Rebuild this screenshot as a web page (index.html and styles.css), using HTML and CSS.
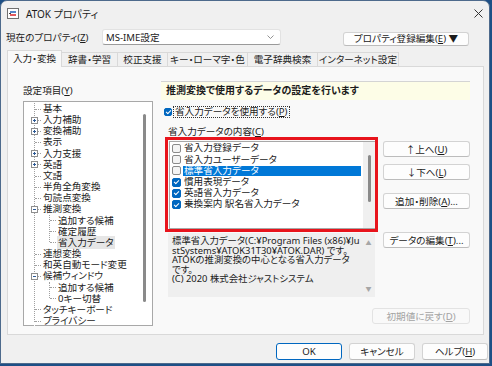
FILE: index.html
```html
<!DOCTYPE html>
<html>

<head>
	<meta charset="utf-8">
	<title>ATOK プロパティ</title>
	<link rel="stylesheet" href="styles.css">
</head>

<body>
	<div class="window">
		<div class="titlebar">
			<svg class="app-icon" width="12" height="11" viewBox="0 0 12 11">
				<rect x="0.5" y="0.5" width="11" height="10" fill="#fff" stroke="#707070" />
				<path d="M3 4 H9" stroke="#1c5fb8" stroke-width="1.3" />
				<path d="M3 7 H9" stroke="#d8232a" stroke-width="1.3" />
				<path d="M2 5.5 H4" stroke="#404040" stroke-width="1" />
			</svg>
			<span class="title">ATOK プロパティ</span>
			<svg class="close" width="9" height="9" viewBox="0 0 9 9">
				<path d="M0.5 0.5 L8.5 8.5 M8.5 0.5 L0.5 8.5" stroke="#333" stroke-width="1" />
			</svg>
		</div>

		<div class="profile-row">
			<span class="profile-label">現在のプロパティ(<u>Z</u>)</span>
			<div class="combo">
				<span>MS-IME設定</span>
				<svg width="7" height="4" viewBox="0 0 7 4">
					<path d="M0.5 0.5 L3.5 3.5 L6.5 0.5" fill="none" stroke="#777" stroke-width="0.8" />
				</svg>
			</div>
			<button class="btn profile-btn">プロパティ登録編集(<u>E</u>) ▼</button>
		</div>

		<div class="tabs">
			<div class="tab active t1">入力・変換</div>
			<div class="tab t2">辞書・学習</div>
			<div class="tab t3">校正支援</div>
			<div class="tab t4">キー・ローマ字・色</div>
			<div class="tab t5">電子辞典検索</div>
			<div class="tab t6">インターネット設定</div>
		</div>

		<div class="panel">
			<div class="left-col">
				<div class="field-label">設定項目(<u>Y</u>)</div>
				<div class="tree">
					<div class="tree-body">
						<div class="branch">
							<div class="node">基本</div>
							<div class="node"><span class="exp plus"></span>入力補助</div>
							<div class="node"><span class="exp plus"></span>変換補助</div>
							<div class="node">表示</div>
							<div class="node"><span class="exp plus"></span>入力支援</div>
							<div class="node"><span class="exp plus"></span>英語</div>
							<div class="node">文語</div>
							<div class="node">半角全角変換</div>
							<div class="node">句読点変換</div>
							<div class="node"><span class="exp"></span>推測変換</div>
							<div class="branch kids">
								<div class="node">追加する候補</div>
								<div class="node">確定履歴</div>
								<div class="node"><span class="selected">省入力データ</span></div>
							</div>
							<div class="node">連想変換</div>
							<div class="node">和英自動モード変更</div>
							<div class="node"><span class="exp"></span>候補ウィンドウ</div>
							<div class="branch kids">
								<div class="node">追加する候補</div>
								<div class="node">0キー切替</div>
							</div>
							<div class="node">タッチキーボード</div>
							<div class="node">プライバシー</div>
						</div>
					</div>
					<div class="vscroll"><div class="thumb"></div></div>
				</div>
			</div>

			<div class="right-col">
				<div class="banner">推測変換で使用するデータの設定を行います</div>
				<div class="check-row">
					<span class="cb small checked"></span>
					<span class="focus">省入力データを使用する(<u>P</u>)</span>
				</div>
				<div class="field-label sub">省入力データの内容(<u>C</u>)</div>

				<div class="data-grid">
					<div class="data-left">
						<div class="highlight">
							<div class="list">
								<div class="list-items">
									<div class="item"><span class="cb"></span><span class="text">省入力登録データ</span></div>
									<div class="item"><span class="cb"></span><span class="text">省入力ユーザーデータ</span></div>
									<div class="item current"><span class="cb"></span><span class="text">標準省入力データ</span></div>
									<div class="item"><span class="cb checked"></span><span class="text">慣用表現データ</span></div>
									<div class="item"><span class="cb checked"></span><span class="text">英語省入力データ</span></div>
									<div class="item"><span class="cb checked"></span><span class="text">乗換案内 駅名省入力データ</span></div>
								</div>
								<div class="list-scroll"><div class="thumb"></div></div>
							</div>
						</div>
						<div class="desc">
							<div class="desc-text">
								<div>標準省入力データ(C:¥Program Files (x86)¥Ju</div>
								<div>stSystems¥ATOK31T30¥ATOK.DAR) です。</div>
								<div>ATOKの推測変換の中心となる省入力データ</div>
								<div>です。</div>
								<div>(C) 2020 株式会社ジャストシステム</div>
							</div>
							<div class="desc-scroll"><span>▲</span><span>▼</span></div>
						</div>
					</div>

					<div class="side-buttons">
						<button class="btn">↑上へ(<u>U</u>)</button>
						<button class="btn down">↓下へ(<u>L</u>)</button>
						<button class="btn add">追加・削除(<u>A</u>)...</button>
						<button class="btn edit">データの編集(<u>T</u>)...</button>
					</div>
				</div>

				<div class="reset-row">
					<button class="btn disabled">初期値に戻す(<u>D</u>)</button>
				</div>
			</div>
		</div>

		<div class="footer">
			<button class="btn default">OK</button>
			<button class="btn">キャンセル</button>
			<button class="btn">ヘルプ(<u>H</u>)</button>
		</div>
	</div>
</body>

</html>
```

FILE: styles.css
```css
:root {
	--face: #f0f0f0;
	--sheet: #f9f9f9;
	--line: #d9d9d9;
	--dots: #a0a0a0;
	--text: #1b1b1b;
	--accent: #0067c0;
}

body {
	margin: 0;
	background: #1d4f86;
	color: var(--text);
	font-family: "Noto Sans", "Noto Sans CJK JP", sans-serif;
	font-size: 9.6px;
	font-feature-settings: "palt" 1;
}

u {
	text-decoration-thickness: 1px;
	text-underline-offset: 1px;
}

.window {
	width: 490px;
	height: 364px;
	box-sizing: border-box;
	border: 1px solid #4d6a8c;
	border-radius: 7px 7px 0 0;
	background: var(--face);
	display: flex;
	flex-direction: column;
	overflow: hidden;
}

.titlebar {
	height: 24px;
	display: flex;
	align-items: center;
	padding-left: 6px;
	flex-shrink: 0;
}

.app-icon {
	margin-right: 7px;
}

.title {
	font-size: 10px;
}

.close {
	margin-left: auto;
	margin-right: 6px;
}

.profile-row {
	display: flex;
	align-items: center;
	height: 16px;
	margin-top: 4px;
	padding-left: 5px;
	flex-shrink: 0;
}

.profile-label {
	width: 96px;
}

.combo {
	width: 179px;
	height: 16px;
	box-sizing: border-box;
	background: #fff;
	border: 1px solid #e2e2e2;
	border-bottom-color: #9a9a9a;
	border-radius: 3px;
	display: flex;
	align-items: center;
	justify-content: space-between;
	padding: 0 6px 0 3px;
}

.btn {
	box-sizing: border-box;
	height: 16px;
	padding: 0;
	background: #fdfdfd;
	border: 1px solid #d3d3d3;
	border-bottom-color: #bcbcbc;
	border-radius: 3px;
	color: var(--text);
	font: inherit;
	font-size: 9.6px;
	line-height: 13px;
	font-feature-settings: "palt" 1;
}

.profile-btn {
	width: 126px;
	height: 14px;
	line-height: 11px;
	margin: 3px 20px 0 auto;
}

.tabs {
	display: flex;
	align-items: flex-end;
	height: 16px;
	margin-top: 5px;
	padding-left: 6px;
	flex-shrink: 0;
}

.tab {
	height: 14px;
	box-sizing: border-box;
	line-height: 13px;
	border: 1px solid var(--line);
	border-bottom: none;
	margin-right: -1px;
	text-align: center;
	white-space: nowrap;
	background: var(--face);
}

.tab.active {
	height: 17px;
	line-height: 15px;
	margin-bottom: -1px;
	background: var(--sheet);
	position: relative;
	z-index: 1;
}

.t1 { width: 55px; }
.t2 { width: 57px; }
.t3 { width: 51px; }
.t4 { width: 81px; }
.t5 { width: 71px; }
.t6 { width: 82px; }

.panel {
	height: 269px;
	box-sizing: border-box;
	margin: 0 5px 0 6px;
	border: 1px solid var(--line);
	background: var(--sheet);
	display: flex;
	gap: 8px;
	padding: 14px 13px 0 15px;
	flex-shrink: 0;
}

.left-col {
	width: 130px;
}

.field-label {
	height: 12px;
	line-height: 12px;
	margin: 4px 0 4px;
}

.tree {
	height: 225px;
	box-sizing: border-box;
	border: 1px solid #a8a8a8;
	background: #fff;
	display: flex;
}

.tree-body {
	flex: 1;
	padding-top: 1px;
	line-height: 11.15px;
}

.branch {
	margin-left: 10px;
	border-left: 1px dotted var(--dots);
}

.branch.kids {
	margin-left: 14px;
}

.node {
	position: relative;
	padding-left: 8px;
	white-space: nowrap;
}

.node::before {
	content: '';
	position: absolute;
	left: 0;
	top: 50%;
	width: 6px;
	border-top: 1px dotted var(--dots);
}

.branch > .node:last-child::after {
	content: '';
	position: absolute;
	left: -1px;
	top: calc(50% + 1px);
	bottom: 0;
	width: 1px;
	background: #fff;
}

.exp {
	position: absolute;
	left: -4px;
	top: calc(50% - 3px);
	width: 7px;
	height: 7px;
	box-sizing: border-box;
	border: 1px solid #8e8e8e;
	background: #fff;
	z-index: 1;
}

.exp::before,
.exp.plus::after {
	content: '';
	position: absolute;
	background: #2d5a96;
}

.exp::before {
	left: 1px;
	top: 2px;
	width: 3px;
	height: 1px;
}

.exp.plus::after {
	left: 2px;
	top: 1px;
	width: 1px;
	height: 3px;
}

.selected {
	background: #e6e6e6;
	padding: 0 1px;
	margin-left: -1px;
}

.vscroll {
	width: 9px;
}

.vscroll .thumb {
	width: 3px;
	height: 188px;
	margin-top: 12px;
	border-radius: 2px;
	background: #8a8a8a;
}

.right-col {
	width: 309px;
}

.banner {
	height: 19px;
	box-sizing: border-box;
	border-top: 1px solid #d4d4d4;
	background: #fdfde7;
	font-size: 10px;
	font-weight: bold;
	line-height: 17px;
	padding-left: 5px;
}

.check-row {
	display: flex;
	align-items: center;
	height: 12px;
	margin-top: 6px;
	padding-left: 3px;
}

.cb {
	width: 9px;
	height: 9px;
	box-sizing: border-box;
	border: 1px solid #8a8a8a;
	border-radius: 2px;
	background: #f4f4f4;
	display: flex;
	align-items: center;
	justify-content: center;
	flex-shrink: 0;
}

.cb.small {
	width: 8px;
	height: 8px;
}

.cb.checked {
	border-color: var(--accent);
	background: var(--accent);
}

.cb.checked::after {
	content: '';
	width: 2px;
	height: 4px;
	margin-top: -1px;
	border: solid #fff;
	border-width: 0 1px 1px 0;
	transform: rotate(45deg);
}

.focus {
	margin-left: 1px;
	padding: 0 1px;
	line-height: 10px;
	border: 1px dotted #333;
}

.field-label.sub {
	margin: 8px 0 -1px;
	padding-left: 7px;
}

.data-grid {
	display: grid;
	grid-template-columns: 213px 87px;
	column-gap: 5px;
	margin-left: 4px;
}

.highlight {
	border: 3px solid #e8141c;
	height: 95px;
	box-sizing: border-box;
	position: relative;
	z-index: 1;
}

.list {
	height: 88px;
	box-sizing: border-box;
	margin: 1px 0 0 1px;
	border: 1px solid #a8a8a8;
	border-right: none;
	background: #fff;
	display: flex;
}

.list-items {
	flex: 1;
	padding: 1px 2px 0;
}

.item {
	display: flex;
	align-items: center;
	height: 11.2px;
	white-space: nowrap;
}

.item .text {
	flex: 1;
	margin-left: 2px;
	padding-left: 1px;
	line-height: 10.5px;
}

.item.current .text {
	background: #0078d7;
	color: #fff;
}

.list-scroll {
	width: 12px;
	background: #f0f0f0;
}

.list-scroll .thumb {
	width: 3px;
	height: 47px;
	margin: 13px 0 0 5px;
	border-radius: 2px;
	background: #8a8a8a;
}

.desc {
	height: 64px;
	margin: 1px 3px 0;
	background: #efefef;
	display: flex;
}

.desc-text {
	flex: 1;
	padding: 3px 0 0 4px;
	font-size: 9.4px;
	line-height: 9.5px;
	white-space: nowrap;
}

.desc-text div {
	height: 9.5px;
}

.desc-scroll {
	width: 13px;
	display: flex;
	flex-direction: column;
	justify-content: space-between;
	align-items: center;
	padding: 5px 0 4px;
	color: #a6a6a6;
	font-size: 6px;
}

.side-buttons {
	display: flex;
	flex-direction: column;
	padding-top: 4px;
}

.side-buttons .down {
	margin-top: 7px;
}

.side-buttons .add {
	margin-top: 13px;
}

.side-buttons .edit {
	margin-top: 23px;
}

.reset-row {
	display: flex;
	justify-content: flex-end;
	margin-top: 11px;
}

.btn.disabled {
	width: 98px;
	color: #a3a3a3;
	border-color: #e3e3e3;
	background: var(--sheet);
}

.footer {
	display: flex;
	justify-content: flex-end;
	gap: 7px;
	margin-top: 8px;
	padding-right: 1px;
}

.footer .btn {
	width: 66px;
	height: 17px;
	line-height: 14px;
}

.footer .default {
	border: 1px solid var(--accent);
}
```
